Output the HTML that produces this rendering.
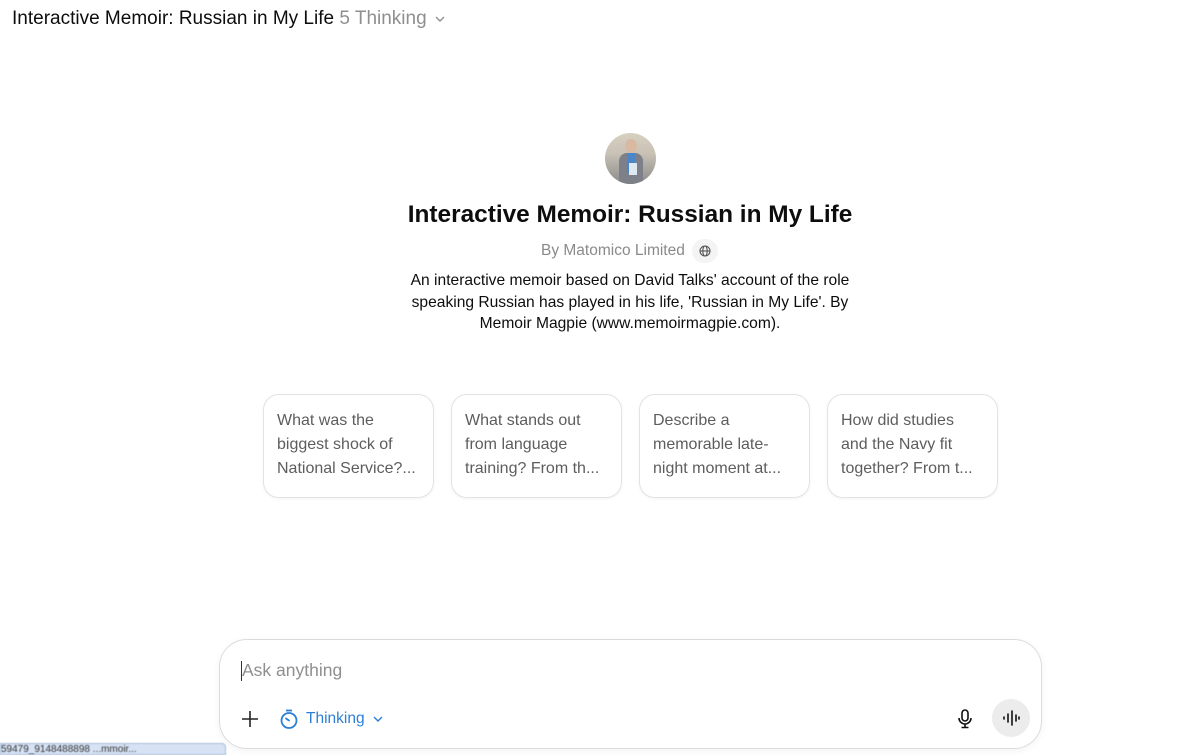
<!DOCTYPE html>
<html><head><meta charset="utf-8"><style>
*{box-sizing:border-box;margin:0;padding:0}
body{width:1200px;height:752px;background:#fff;font-family:"Liberation Sans",sans-serif;position:relative;overflow:hidden;color:#0d0d0d}
.top{position:absolute;left:12px;top:8px;font-size:19px;color:#0d0d0d}
.top span{color:#8f8f8f}
.av{position:absolute;left:605px;top:133px;width:51px;height:51px;border-radius:50%;overflow:hidden;background:linear-gradient(180deg,#d8d0c0 0%,#c9c2b5 40%,#8a8a8a 100%)}
.av .b{position:absolute;left:14px;top:20px;width:24px;height:32px;background:#7d8088;border-radius:8px 8px 0 0}
.av .s{position:absolute;left:22px;top:20px;width:8px;height:20px;background:#4a86c8}
.av .h{position:absolute;left:20px;top:6px;width:12px;height:14px;background:#d9b9a2;border-radius:50%}
.av .k{position:absolute;left:24px;top:30px;width:8px;height:12px;background:#dfe8f0}
h1{position:absolute;top:201px;left:330px;width:600px;text-align:center;font-size:24.4px;font-weight:600;color:#0d0d0d}
.by{position:absolute;top:242px;left:541px;font-size:15.5px;color:#8a8a8a}
.glob{position:absolute;left:692px;top:239px;width:26px;height:24px;border-radius:12px;background:#f4f4f4}
.desc{position:absolute;top:270px;left:395px;width:470px;text-align:center;font-size:15.6px;line-height:21.5px;color:#0d0d0d}
.card{position:absolute;top:394px;width:171px;height:104px;border:1px solid #e3e3e3;border-radius:16px;padding:14px 17px 14px 13px;font-size:16px;line-height:24px;color:#5d5d5d;box-shadow:0 1px 3px rgba(0,0,0,.05)}
.box{position:absolute;left:219px;top:639px;width:823px;height:110px;border:1px solid #dcdcdc;border-radius:28px;box-shadow:0 2px 8px rgba(0,0,0,.05)}
.ph{position:absolute;left:22px;top:20px;font-size:17.5px;color:#8f8f8f}
.ph:before{content:"";position:absolute;left:-1px;top:1px;width:1px;height:20px;background:#333}
.th{position:absolute;left:86px;top:70px;font-size:15.5px;color:#2d7fd5}
.voice{position:absolute;left:772px;top:59px;width:38px;height:38px;border-radius:50%;background:#ececec}
.tab{position:absolute;left:0;top:743px;width:226px;height:12px;background:#d7e3f5;border:1px solid #a9bddb;border-radius:0 4px 0 0;font-size:10px;color:#333;overflow:hidden;filter:blur(.6px)}
</style></head><body>
<div class="top">Interactive Memoir: Russian in My Life <span>5 Thinking</span>
<svg width="12" height="8" style="margin-left:2px;vertical-align:middle" viewBox="0 0 12 8"><path d="M2 2l4 4 4-4" fill="none" stroke="#8f8f8f" stroke-width="1.4"/></svg></div>
<div class="av"><div class="b"></div><div class="s"></div><div class="h"></div><div class="k"></div></div>
<h1>Interactive Memoir: Russian in My Life</h1>
<div class="by">By Matomico Limited</div>
<div class="glob"><svg width="26" height="24" viewBox="0 0 26 24"><g fill="none" stroke="#555" stroke-width="1.1"><circle cx="13" cy="12" r="5"/><ellipse cx="13" cy="12" rx="2.2" ry="5"/><path d="M8 12h10"/></g></svg></div>
<div class="desc">An interactive memoir based on David Talks' account of the role speaking Russian has played in his life, 'Russian in My Life'. By Memoir Magpie (www.memoirmagpie.com).</div>
<div class="card" style="left:263px">What was the biggest shock of National Service?...</div>
<div class="card" style="left:451px">What stands out from language training? From th...</div>
<div class="card" style="left:639px">Describe a memorable late-night moment at...</div>
<div class="card" style="left:827px">How did studies and the Navy fit together? From t...</div>
<div class="box">
<div class="ph">Ask anything</div>
<svg style="position:absolute;left:21px;top:70px" width="18" height="18" viewBox="0 0 18 18"><path d="M9 1v16M1 9h16" stroke="#222" stroke-width="1.6"/></svg>
<svg style="position:absolute;left:59px;top:68px" width="20" height="22" viewBox="0 0 20 22"><g fill="none" stroke="#2d7fd5" stroke-width="1.8"><circle cx="10" cy="12.5" r="7.5"/><path d="M7 2.5h6"/><path d="M10 12.5l-3-2" stroke-linecap="round"/></g></svg>
<div class="th">Thinking <svg width="12" height="8" style="margin-left:3px" viewBox="0 0 12 8"><path d="M2 2l4 4 4-4" fill="none" stroke="#2d7fd5" stroke-width="1.4"/></svg></div>
<svg style="position:absolute;left:737px;top:69px" width="16" height="20" viewBox="0 0 16 20"><g fill="none" stroke="#111" stroke-width="1.6"><rect x="5" y="1" width="6" height="11" rx="3"/><path d="M2 9a6 6 0 0 0 12 0M8 15v3M4.5 18.5h7"/></g></svg>
<div class="voice"><svg width="38" height="38" viewBox="0 0 38 38"><g stroke="#111" stroke-width="1.6" stroke-linecap="round"><path d="M12 18v2M16 15v8M20 12v14M24 16v6M27 18v2"/></g></svg></div>
</div>
<div class="tab">59479_9148488898 ...mmoir...</div>
</body></html>
